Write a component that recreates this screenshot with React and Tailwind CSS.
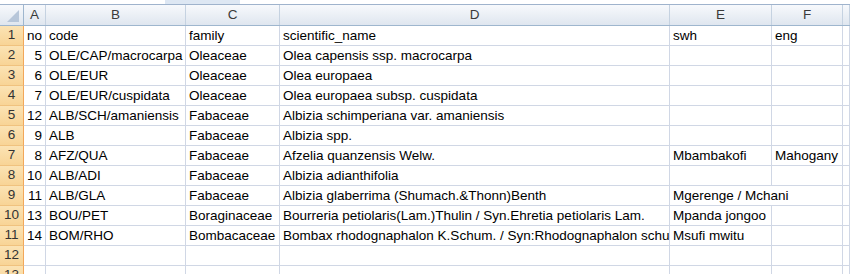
import React from 'react'

const cols = ['A', 'B', 'C', 'D', 'E', 'F', '']
const widths = ['w-[22px]', 'w-[140px]', 'w-[94px]', 'w-[390px]', 'w-[102px]', 'w-[71px]', 'flex-1']

const rows = [
    ['no', 'code', 'family', 'scientific_name', 'swh', 'eng'],
    ['5', 'OLE/CAP/macrocarpa', 'Oleaceae', 'Olea capensis ssp. macrocarpa', '', ''],
    ['6', 'OLE/EUR', 'Oleaceae', 'Olea europaea', '', ''],
    ['7', 'OLE/EUR/cuspidata', 'Oleaceae', 'Olea europaea subsp. cuspidata', '', ''],
    ['12', 'ALB/SCH/amaniensis', 'Fabaceae', 'Albizia schimperiana var. amaniensis', '', ''],
    ['9', 'ALB', 'Fabaceae', 'Albizia spp.', '', ''],
    ['8', 'AFZ/QUA', 'Fabaceae', 'Afzelia quanzensis Welw.', 'Mbambakofi', 'Mahogany'],
    ['10', 'ALB/ADI', 'Fabaceae', 'Albizia adianthifolia', '', ''],
    ['11', 'ALB/GLA', 'Fabaceae', 'Albizia glaberrima (Shumach.&Thonn)Benth', 'Mgerenge / Mchani', ''],
    ['13', 'BOU/PET', 'Boraginaceae', 'Bourreria petiolaris(Lam.)Thulin / Syn.Ehretia petiolaris Lam.', 'Mpanda jongoo', ''],
    ['14', 'BOM/RHO', 'Bombacaceae', 'Bombax rhodognaphalon K.Schum. / Syn:Rhodognaphalon schu', 'Msufi mwitu', ''],
    ['', '', '', '', '', ''],
    ['', '', '', '', '', ''],
]

const RowHeader = ({ n }) => (
    <div className="w-[24px] shrink-0 h-full bg-gradient-to-b from-[#fbe3b4] to-[#f8d496] border-r border-b border-r-[#f2a75a] border-b-[#f0c27f] flex items-center justify-center text-[#333]">
        {n}
    </div>
)

const Cell = ({ w, children, right }) => (
    <div className={`${w} shrink-0 h-full border-r border-b border-[#d0d7e5] px-[3px] pt-[1px] flex items-center whitespace-nowrap overflow-hidden ${right ? 'justify-end' : ''}`}>
        {children}
    </div>
)

export default function App() {
    return (
        <div className="w-[850px] h-[274px] overflow-hidden bg-white text-[13.5px] text-black" style={{ fontFamily: '"Liberation Sans", Arial, sans-serif' }}>
            <div className="h-[4px] flex bg-white">
                <div className="w-[165px]" />
                <div className="w-[75px] bg-[#dde7f3]" />
            </div>
            <div className="h-[1px] bg-[#9fb3cc]" />
            <div className="h-[21px] flex bg-gradient-to-b from-[#f7f9fc] to-[#dfe6ef] border-b border-[#9eb6ce] text-[#3a3a3a]">
                <div className="w-[24px] shrink-0 border-r border-[#9eb6ce] relative">
                    <svg width="24" height="20" className="absolute inset-0">
                        <polygon points="19,5 19,17 7,17" fill="#b7c6d9" />
                    </svg>
                </div>
                {cols.map((c, i) => (
                    <div key={i} className={`${widths[i]} shrink-0 border-r border-[#c5d2e1] flex items-center justify-center`}>
                        {c}
                    </div>
                ))}
            </div>
            {rows.map((r, ri) => (
                <div key={ri} className="h-[20px] flex">
                    <RowHeader n={ri + 1} />
                    <Cell w={widths[0]} right={ri > 0}>{r[0]}</Cell>
                    <Cell w={widths[1]}>{r[1]}</Cell>
                    <Cell w={widths[2]}>{r[2]}</Cell>
                    <Cell w={widths[3]}>{r[3]}</Cell>
                    {ri === 8 ? (
                        <Cell w="w-[173px]">{r[4]}</Cell>
                    ) : (
                        <>
                            <Cell w={widths[4]}>{r[4]}</Cell>
                            <Cell w={widths[5]}>{r[5]}</Cell>
                        </>
                    )}
                    <Cell w="flex-1" />
                </div>
            ))}
        </div>
    )
}
